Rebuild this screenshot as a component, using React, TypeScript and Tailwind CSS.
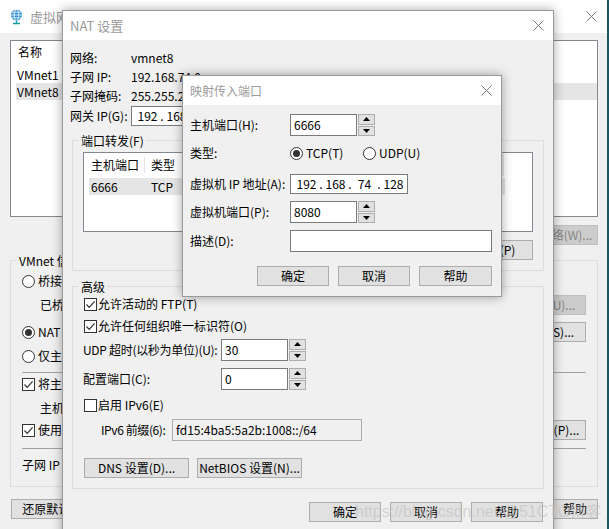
import { Fragment, type ReactNode } from "react";

const FONT = "font-['Noto_Sans_CJK_SC','Noto_Sans',sans-serif]";

function Btn({ children, className = "", disabled = false }: { children?: ReactNode; className?: string; disabled?: boolean }) {
  return (
    <div
      className={`flex h-[20px] shrink-0 items-center justify-center whitespace-nowrap border ${
        disabled ? "border-[#bfbfbf] bg-[#cccccc] text-[#838383]" : "border-[#adadad] bg-[#e1e1e1] text-black"
      } ${className}`}
    >
      {children}
    </div>
  );
}

function Check({ checked = false }: { checked?: boolean }) {
  return (
    <div className="flex h-[13px] w-[13px] shrink-0 items-center justify-center border border-[#333] bg-white">
      {checked && (
        <svg width="11" height="11" viewBox="0 0 11 11">
          <path d="M1.5 5.5 L4.2 8.3 L9.6 2.4" fill="none" stroke="#333" strokeWidth="1.2" />
        </svg>
      )}
    </div>
  );
}

function Radio({ checked = false }: { checked?: boolean }) {
  return (
    <div className="flex h-[13px] w-[13px] shrink-0 items-center justify-center rounded-full border border-[#333] bg-white">
      {checked && <div className="h-[7px] w-[7px] rounded-full bg-[#333]" />}
    </div>
  );
}

function Tri({ up = false }: { up?: boolean }) {
  return (
    <svg width="7" height="4" viewBox="0 0 7 4">
      <polygon points={up ? "0,4 7,4 3.5,0" : "0,0 7,0 3.5,4"} fill="#000" />
    </svg>
  );
}

function Spin({ value }: { value: string }) {
  return (
    <div className="flex h-[22px] shrink-0">
      <div className="flex w-[67px] items-center border border-[#7a7a7a] bg-white pl-[3px]">{value}</div>
      <div className="ml-[1px] flex w-[17px] flex-col gap-[1px]">
        <div className="flex flex-1 items-center justify-center border border-[#adadad] bg-[#e1e1e1]">
          <Tri up />
        </div>
        <div className="flex flex-1 items-center justify-center border border-[#adadad] bg-[#e1e1e1]">
          <Tri />
        </div>
      </div>
    </div>
  );
}

function Ip({ parts, className = "" }: { parts: string[]; className?: string }) {
  return (
    <div className={`flex h-[20px] shrink-0 items-center overflow-hidden border border-[#7a7a7a] bg-white pl-[4px] ${className}`}>
      {parts.map((p, i) => (
        <Fragment key={i}>
          {i > 0 && <span className="w-[6px] shrink-0 text-center">.</span>}
          <span className="w-[23px] shrink-0 text-center">{p}</span>
        </Fragment>
      ))}
    </div>
  );
}

function Close() {
  return (
    <svg width="11" height="11" viewBox="0 0 11 11">
      <path d="M0.5 0.5 L10.5 10.5 M10.5 0.5 L0.5 10.5" stroke="#777" strokeWidth="1" />
    </svg>
  );
}

function Group({ legend, className = "", children }: { legend: string; className?: string; children: ReactNode }) {
  return (
    <div className={`relative border border-[#dcdcdc] ${className}`}>
      <div className="absolute -top-[9px] left-[6px] bg-[#f0f0f0] px-[2px] leading-[17px]">{legend}</div>
      {children}
    </div>
  );
}

function MainWindow() {
  return (
    <div className="absolute left-0 top-0 flex h-[529px] w-[607px] flex-col bg-[#f0f0f0]">
      <div className="flex h-[33px] shrink-0 items-center bg-white pl-[10px] pr-[10px]">
        <svg width="13" height="16" viewBox="0 0 13 16">
          <circle cx="6.5" cy="6" r="5.5" fill="#2b8fd8" />
          <ellipse cx="6.5" cy="6" rx="2.3" ry="5.5" fill="none" stroke="#fff" strokeWidth="0.8" />
          <path d="M1 6 H12 M2 3.2 H11 M2 8.8 H11" stroke="#fff" strokeWidth="0.8" />
          <path d="M6.5 11.5 V14 M3 14.5 H10" stroke="#1f9aa8" strokeWidth="1.4" />
        </svg>
        <span className="ml-[7px] text-[13px] text-[#9a9a9a]">虚拟网络编辑器</span>
        <div className="ml-auto">
          <Close />
        </div>
      </div>

      <div className="flex flex-col pl-[10px] pr-[9px]">
        <div className="mt-[7px] h-[177px] border border-[#828790] bg-white">
          <div className="flex h-[22px] items-center pl-[7px]">
            <span className="w-[90px]">名称</span>
            <span>类型</span>
          </div>
          <div className="ml-[5px] mt-[3px] flex h-[17px] items-center pl-[1px]">VMnet1</div>
          <div className="ml-[5px] flex h-[17px] items-center bg-[#e5e5e5] pl-[1px]">VMnet8</div>
        </div>

        <div className="mt-[8px] flex justify-end gap-[8px]">
          <Btn disabled className="h-[19px] w-[100px]">
            重命名网络(W)...
          </Btn>
        </div>

        <Group legend="VMnet 信息" className="mt-[15px] px-[11px] pb-[13px] pt-[12px]">
          <div className="flex h-[16px] items-center gap-[3px]">
            <Radio />
            <span>桥接模式(将虚拟机直接连接到外部网络)(B)</span>
          </div>
          <div className="mt-[6px] flex h-[20px] items-center justify-between">
            <span className="pl-[18px]">已桥接至(G):</span>
            <Btn disabled className="h-[19px] w-[96px]">
              自动设置(U)...
            </Btn>
          </div>
          <div className="mt-[7px] flex h-[20px] items-center justify-between">
            <div className="flex items-center gap-[3px]">
              <Radio checked />
              <span>NAT 模式(与虚拟机共享主机的 IP 地址)(N)</span>
            </div>
            <Btn className="h-[19px] w-[98px]">NAT 设置(S)...</Btn>
          </div>
          <div className="mt-[6px] flex h-[16px] items-center gap-[3px]">
            <Radio />
            <span>仅主机模式(在专用网络内连接虚拟机)(H)</span>
          </div>
          <div className="mt-[8px] h-px bg-[#a0a0a0]" />
          <div className="mt-[3px] flex h-[16px] items-center gap-[3px]">
            <Check checked />
            <span>将主机虚拟适配器连接到此网络(V)</span>
          </div>
          <div className="mt-[8px] flex h-[16px] items-center pl-[18px]">主机虚拟适配器名称: VMware 网络适配器 VMnet8</div>
          <div className="mt-[4px] flex h-[20px] items-center justify-between">
            <div className="flex items-center gap-[3px]">
              <Check checked />
              <span>使用本地 DHCP 服务将 IP 地址分配给虚拟机(D)</span>
            </div>
            <Btn className="h-[19px] w-[98px]">DHCP 设置(P)...</Btn>
          </div>
          <div className="mt-[8px] h-px bg-[#a0a0a0]" />
          <div className="mt-[8px] flex h-[16px] items-center">子网 IP (I): 192.168.74.0</div>
        </Group>

        <div className="mt-[12px] flex justify-between">
          <Btn className="ml-[1px] w-[110px]">还原默认设置(R)</Btn>
          <div className="flex gap-[8px]">
            <Btn className="w-[75px]">确定</Btn>
            <Btn className="w-[75px]">取消</Btn>
            <Btn className="w-[75px]">应用(A)</Btn>
            <Btn className="w-[46px]">帮助</Btn>
          </div>
        </div>
      </div>
    </div>
  );
}

function NatWindow() {
  return (
    <div className="absolute left-[62px] top-[10px] flex h-[540px] w-[492px] flex-col border border-[#9a9a9a] bg-[#f0f0f0] shadow-[0_0_10px_rgba(0,0,0,0.35)]">
      <div className="flex h-[29px] shrink-0 items-center bg-white pl-[7px] pr-[9px]">
        <span className="text-[13px] text-[#9a9a9a]">NAT 设置</span>
        <div className="ml-auto">
          <Close />
        </div>
      </div>

      <div className="flex flex-col pt-[8px]">
        <div className="grid grid-cols-[61px_1fr] pl-[7px]">
          <div className="flex h-[19px] items-center">网络:</div>
          <div className="flex h-[19px] items-center">vmnet8</div>
          <div className="flex h-[19px] items-center">子网 IP:</div>
          <div className="flex h-[19px] items-center">192.168.74.0</div>
          <div className="flex h-[19px] items-center">子网掩码:</div>
          <div className="flex h-[19px] items-center">255.255.255.0</div>
          <div className="mt-[1px] flex h-[20px] items-center">网关 IP(G):</div>
          <div className="mt-[1px] flex">
            <Ip parts={["192", "168", "74", "2"]} className="w-[130px]" />
          </div>
        </div>

        <Group legend="端口转发(F)" className="mx-[9px] mt-[14px] px-[10px] pb-[10px] pt-[11px]">
          <div className="h-[80px] border border-[#828790] bg-white pl-[5px] pt-px">
            <div className="flex h-[22px] items-center">
              <span className="w-[56px] border-r border-[#e5e5e5] pl-[2px]">主机端口</span>
              <span className="pl-[6px]">类型</span>
              <span className="ml-[40px]">虚拟机 IP 地址</span>
              <span className="ml-auto mr-[28px] h-[22px] w-[3px] bg-[#e5e5e5]" />
            </div>
            <div className="mt-[2px] flex h-[17px] w-[416px] items-center bg-[#e5e5e5]">
              <span className="w-[62px] pl-[2px]">6666</span>
              <span>TCP</span>
              <span className="ml-[46px]">192.168.74.128:8080</span>
            </div>
          </div>
          <div className="mt-[8px] flex justify-end gap-[8px]">
            <Btn className="h-[19px] w-[75px]">添加(A)...</Btn>
            <Btn className="h-[19px] w-[75px]">移除(R)</Btn>
            <Btn className="h-[19px] w-[75px]">属性(P)</Btn>
          </div>
        </Group>

        <Group legend="高级" className="mx-[9px] mt-[15px] pb-[10px] pl-[10px] pt-[9px]">
          <div className="flex h-[16px] items-center gap-[1px] pl-px">
            <Check checked />
            <span>允许活动的 FTP(T)</span>
          </div>
          <div className="mt-[6px] flex h-[16px] items-center gap-[1px] pl-px">
            <Check checked />
            <span>允许任何组织唯一标识符(O)</span>
          </div>
          <div className="mt-[5px] flex items-center">
            <span className="w-[138px] shrink-0 tracking-[-0.3px]">UDP 超时(以秒为单位)(U):</span>
            <Spin value="30" />
          </div>
          <div className="mt-[7px] flex items-center">
            <span className="w-[138px] shrink-0">配置端口(C):</span>
            <Spin value="0" />
          </div>
          <div className="mt-[7px] flex h-[16px] items-center gap-[1px] pl-px">
            <Check />
            <span>启用 IPv6(E)</span>
          </div>
          <div className="mt-[6px] flex items-center pl-[18px]">
            <span className="w-[71px] shrink-0 tracking-[-0.4px]">IPv6 前缀(6):</span>
            <div className="flex h-[22px] w-[190px] items-center border border-[#adadad] bg-[#f0f0f0] pl-[3px]">
              fd15:4ba5:5a2b:1008::/64
            </div>
          </div>
          <div className="mt-[17px] flex gap-[8px] pl-px">
            <Btn className="w-[105px]">DNS 设置(D)...</Btn>
            <Btn className="w-[105px]">NetBIOS 设置(N)...</Btn>
          </div>
        </Group>

        <div className="mt-[13px] flex justify-end gap-[9px] pr-[10px]">
          <Btn className="w-[72px]">确定</Btn>
          <Btn className="w-[72px]">取消</Btn>
          <Btn className="w-[72px]">帮助</Btn>
        </div>
      </div>
    </div>
  );
}

function MapWindow() {
  return (
    <div className="absolute left-[182px] top-[75px] flex h-[222px] w-[320px] flex-col border border-[#9a9a9a] bg-[#f0f0f0] shadow-[0_0_10px_rgba(0,0,0,0.35)]">
      <div className="flex h-[29px] shrink-0 items-center bg-white pl-[7px] pr-[9px]">
        <span className="text-[12px] text-[#9a9a9a]">映射传入端口</span>
        <div className="ml-auto">
          <Close />
        </div>
      </div>

      <div className="grid grid-cols-[100px_1fr] pl-[7px]">
        <div className="mt-[9px] flex h-[22px] items-center">主机端口(H):</div>
        <div className="mt-[9px]">
          <Spin value="6666" />
        </div>

        <div className="mt-[6px] flex h-[22px] items-center">类型:</div>
        <div className="mt-[6px] flex h-[22px] items-center">
          <Radio checked />
          <span className="ml-[3px] w-[57px]">TCP(T)</span>
          <Radio />
          <span className="ml-[3px]">UDP(U)</span>
        </div>

        <div className="mt-[10px] flex h-[20px] items-center">虚拟机 IP 地址(A):</div>
        <div className="mt-[10px]">
          <Ip parts={["192", "168", "74", "128"]} className="w-[118px]" />
        </div>

        <div className="mt-[7px] flex h-[22px] items-center">虚拟机端口(P):</div>
        <div className="mt-[7px]">
          <Spin value="8080" />
        </div>

        <div className="mt-[7px] flex h-[22px] items-center">描述(D):</div>
        <div className="mt-[7px]">
          <div className="h-[22px] w-[202px] border border-[#7a7a7a] bg-white" />
        </div>
      </div>

      <div className="mt-[14px] flex justify-end gap-[9px] pr-[9px]">
        <Btn className="w-[72px]">确定</Btn>
        <Btn className="w-[72px]">取消</Btn>
        <Btn className="w-[73px]">帮助</Btn>
      </div>
    </div>
  );
}

export default function App() {
  return (
    <div className={`relative h-[529px] w-[609px] overflow-hidden whitespace-nowrap bg-[#1d5560] text-[12px] leading-[16px] text-black ${FONT}`}>
      <MainWindow />
      <NatWindow />
      <MapWindow />
      <div className="pointer-events-none absolute left-[355px] top-[502px] font-['Liberation_Sans',sans-serif] text-[16px] leading-[20px] text-[rgba(190,190,190,0.6)]">
        https://blog.csdn.net/@51CTO博客
      </div>
    </div>
  );
}
